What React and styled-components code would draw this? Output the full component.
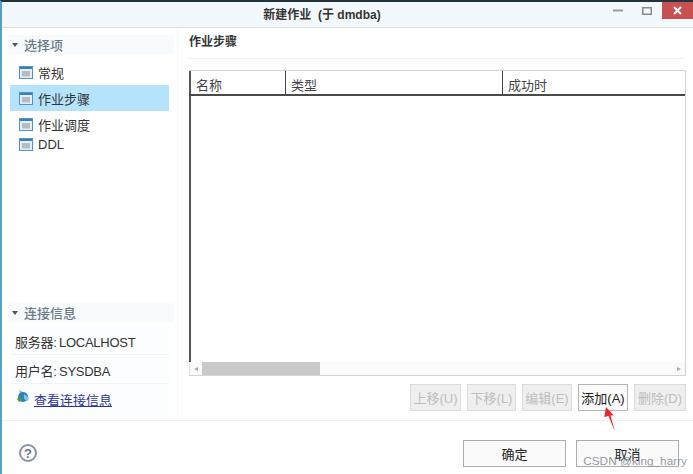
import React from 'react'
import styled, { createGlobalStyle } from 'styled-components'

const Global = createGlobalStyle`
  html, body { margin: 0; padding: 0; background: #fff; }
  * { box-sizing: border-box; }
  body { font-family: "Liberation Sans", "Noto Sans CJK SC", sans-serif; }
`
const Win = styled.div`
  position: relative;
  width: 693px;
  height: 474px;
  overflow: hidden;
  background: #fff;
  border-top: 2px solid #23343c;
  border-left: 2px solid #5d9cc4;
  display: flex;
  flex-direction: column;
  color: #333;
`
const TitleBar = styled.div`
  height: 26px;
  flex: none;
  background: #f3f8fc;
  border-bottom: 1px solid #dcdedf;
  position: relative;
  display: flex;
  justify-content: center;
  padding: 5px 51px 0 0;
  font-size: 12px;
  font-weight: bold;
  line-height: 16px;
  color: #333;
  white-space: pre;
`
const Controls = styled.div`
  position: absolute;
  top: 0;
  right: 0;
  display: flex;
  align-items: flex-start;
`
const CtlBtn = styled.div`
  width: ${p => p.$w}px;
  height: 17px;
  display: flex;
  align-items: center;
  justify-content: center;
  background: ${p => p.$bg || 'transparent'};
`
const Body = styled.div`
  flex: none;
  height: 392px;
  display: flex;
`
const Side = styled.div`
  width: 176px;
  flex: none;
  padding: 7px 0 0 6px;
  display: flex;
  flex-direction: column;
  border-right: 1px solid #f6f6f6;
`
const SectionHead = styled.div`
  width: 166px;
  height: 19px;
  flex: none;
  background: #f8fbfd;
  display: flex;
  align-items: center;
  padding-left: 4px;
  gap: 6px;
  font-size: 13px;
  color: #6a7a85;
  font-weight: 500;
`
const Caret = styled.span`
  width: 0;
  height: 0;
  border-left: 3.5px solid transparent;
  border-right: 3.5px solid transparent;
  border-top: 4px solid #555;
`
const NavList = styled.div`
  margin-top: 5px;
  display: flex;
  flex-direction: column;
  padding-left: 2px;
`
const NavItem = styled.div`
  width: 159px;
  height: ${p => p.$h}px;
  display: flex;
  align-items: center;
  gap: 5px;
  padding-left: 9px;
  font-size: 13px;
  color: #333;
  background: ${p => (p.$on ? '#b5e3fc' : 'transparent')};
`
const Spacer = styled.div`
  flex: 1;
`
const InfoList = styled.div`
  margin: 4px 0 5px 3px;
  display: flex;
  flex-direction: column;
`
const InfoRow = styled.div`
  width: 158px;
  height: 29px;
  display: flex;
  align-items: center;
  padding: 3px 0 0 4px;
  font-size: 13px;
  letter-spacing: -0.25px;
  word-spacing: -1px;
  white-space: pre;
  color: #333;
  background: #fcfdfe;
  border-bottom: 1px solid #f1f4f6;
`
const LinkRow = styled.div`
  width: 158px;
  height: 31px;
  display: flex;
  gap: 4px;
  padding: 5px 0 0 5px;
  background: #fcfdfe;
`
const Link = styled.a`
  font-size: 13px;
  line-height: 16px;
  color: #2b35a0;
  text-decoration: underline;
  margin-top: 4px;
`
const Main = styled.div`
  flex: 1;
  min-width: 0;
  padding: 7px 5px 0 11px;
  display: flex;
  flex-direction: column;
`
const PageTitle = styled.div`
  height: 24px;
  font-size: 12px;
  font-weight: bold;
  line-height: 15px;
  color: #333;
  border-bottom: 1px solid #f0f3f5;
  margin-right: 5px;
`
const Table = styled.div`
  margin-top: 11px;
  width: 497px;
  height: 306px;
  border: 1px solid #d4d4d4;
  border-left: none;
  display: flex;
  flex-direction: column;
`
const Head = styled.div`
  height: 25px;
  flex: none;
  display: grid;
  grid-template-columns: 97px 217px 1fr;
  border-bottom: 2px solid #4a4a4a;
`
const HeadCell = styled.div`
  font-size: 13px;
  color: #444;
  padding: 6px 0 0 5px;
  line-height: 17px;
  border-left: ${p => (p.$first ? '2px solid #555' : 'none')};
  border-right: ${p => (p.$last ? 'none' : '1px solid #444')};
`
const Rows = styled.div`
  flex: 1;
  border-left: 2px solid #555;
`
const HScroll = styled.div`
  height: 13px;
  flex: none;
  background: #fbfbfb;
  border-left: 1px solid #e2e2e2;
  display: flex;
  align-items: stretch;
`
const ArrowCell = styled.div`
  width: 12px;
  display: flex;
  align-items: center;
  justify-content: center;
  background: #fafafa;
`
const Thumb = styled.div`
  width: 118px;
  background: #c9c9c9;
`
const Tri = styled.span`
  width: 0;
  height: 0;
  border-top: 2.5px solid transparent;
  border-bottom: 2.5px solid transparent;
  border-${p => (p.$dir === 'left' ? 'right' : 'left')}: 4px solid #aaa;
`
const ActionBar = styled.div`
  margin-top: 8px;
  width: 497px;
  display: flex;
  justify-content: flex-end;
  gap: 6px;
`
const ActionBtn = styled.div`
  width: ${p => p.$w}px;
  height: 27px;
  display: flex;
  align-items: center;
  justify-content: center;
  font-size: 13px;
  white-space: nowrap;
  border: 1px solid ${p => (p.$off ? '#dcdcdc' : '#b4b4b4')};
  background: ${p => (p.$off ? '#efefef' : '#fbfbfb')};
  color: ${p => (p.$off ? '#bdbdbd' : '#222')};
`
const Footer = styled.div`
  flex: 1;
  border-top: 1px solid #eef1f3;
  display: flex;
  align-items: flex-start;
  justify-content: space-between;
  padding: 19px 14px 0 17px;
`
const Help = styled.div`
  width: 18px;
  height: 18px;
  margin-top: 4px;
  border-radius: 50%;
  border: 2px solid #8a93a8;
  background: #fff;
  color: #6d7488;
  font-size: 13px;
  font-weight: bold;
  display: flex;
  align-items: center;
  justify-content: center;
`
const FooterBtns = styled.div`
  display: flex;
  gap: 10px;
`
const DlgBtn = styled.div`
  width: 103px;
  height: 27px;
  border: 1px solid #adadad;
  background: #fbfafb;
  display: flex;
  align-items: center;
  justify-content: center;
  font-size: 13px;
  color: #222;
`
const Mark = styled.div`
  position: absolute;
  right: 6px;
  bottom: 6px;
  font-size: 11.8px;
  line-height: 14px;
  color: rgba(130, 135, 140, 0.85);
`
const Pointer = styled.svg`
  position: absolute;
  left: 601px;
  top: 403px;
`

const TableIcon = () => (
  <svg width="14" height="13" viewBox="0 0 14 13">
    <rect x="0.5" y="0.5" width="13" height="12" fill="#e6eef5" stroke="#4d94d0" />
    <rect x="1" y="1" width="12" height="2" fill="#3d7fb8" />
    <rect x="3" y="5" width="8" height="5.5" fill="#b5bcc2" />
  </svg>
)

const navItems = [
  { label: '常规', h: 26 },
  { label: '作业步骤', h: 26, on: true },
  { label: '作业调度', h: 26 },
  { label: 'DDL', h: 14 },
]

const actions = [
  { label: '上移(U)', w: 51, off: true },
  { label: '下移(L)', w: 49, off: true },
  { label: '编辑(E)', w: 50, off: true },
  { label: '添加(A)', w: 50 },
  { label: '删除(D)', w: 52, off: true },
]

export default function App() {
  return (
    <>
      <Global />
      <Win>
        <TitleBar>
          新建作业  (于 dmdba)
          <Controls>
            <CtlBtn $w={27}>
              <svg width="10" height="3"><rect width="10" height="2" y="0.5" fill="#9a9a9a" /></svg>
            </CtlBtn>
            <CtlBtn $w={31}>
              <svg width="10" height="8"><rect x="0.75" y="0.75" width="8.5" height="6.5" fill="none" stroke="#8b8b8b" strokeWidth="1.5" /></svg>
            </CtlBtn>
            <CtlBtn $w={31} $bg="#c75050">
              <svg width="9" height="9" viewBox="0 0 9 9">
                <path d="M1 1 L8 8 M8 1 L1 8" stroke="#fff" strokeWidth="2" />
              </svg>
            </CtlBtn>
          </Controls>
        </TitleBar>
        <Body>
          <Side>
            <SectionHead><Caret />选择项</SectionHead>
            <NavList>
              {navItems.map(item => (
                <NavItem key={item.label} $h={item.h} $on={item.on}>
                  <TableIcon />
                  {item.label}
                </NavItem>
              ))}
            </NavList>
            <Spacer />
            <SectionHead><Caret />连接信息</SectionHead>
            <InfoList>
              <InfoRow>服务器: LOCALHOST</InfoRow>
              <InfoRow>用户名: SYSDBA</InfoRow>
              <LinkRow>
                <svg width="14" height="15" viewBox="0 0 14 15">
                  <path d="M3 1 L7 3 L4 5 Z" fill="#8fb7d6" />
                  <circle cx="7" cy="8" r="5" fill="#2f7fc0" />
                  <path d="M1 10 L4 7 L6 11 L3 13 Z" fill="#3aa04a" />
                  <path d="M8 5 L13 9 L12 12 L8 10 Z" fill="#7fc4ea" />
                </svg>
                <Link>查看连接信息</Link>
              </LinkRow>
            </InfoList>
          </Side>
          <Main>
            <PageTitle>作业步骤</PageTitle>
            <Table>
              <Head>
                <HeadCell $first>名称</HeadCell>
                <HeadCell>类型</HeadCell>
                <HeadCell $last>成功时</HeadCell>
              </Head>
              <Rows />
              <HScroll>
                <ArrowCell><Tri $dir="left" /></ArrowCell>
                <Thumb />
                <Spacer />
                <ArrowCell><Tri $dir="right" /></ArrowCell>
              </HScroll>
            </Table>
            <ActionBar>
              {actions.map(a => (
                <ActionBtn key={a.label} $w={a.w} $off={a.off}>{a.label}</ActionBtn>
              ))}
            </ActionBar>
          </Main>
        </Body>
        <Footer>
          <Help>?</Help>
          <FooterBtns>
            <DlgBtn>确定</DlgBtn>
            <DlgBtn>取消</DlgBtn>
          </FooterBtns>
        </Footer>
        <Pointer width="20" height="32" viewBox="0 0 20 32">
          <path d="M3 2 L10.7 10.3 L7.5 10.5 L12 27 L5.5 11 L1.3 12 Z" fill="#e8282c" />
        </Pointer>
        <Mark>CSDN @king_harry</Mark>
      </Win>
    </>
  )
}
